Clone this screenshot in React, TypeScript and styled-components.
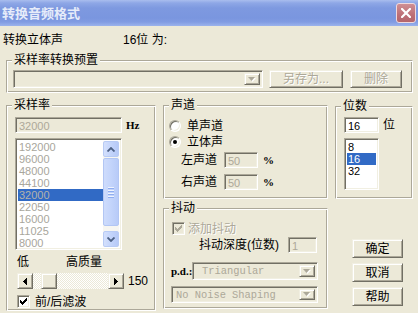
import React from 'react'
import styled, { createGlobalStyle, css } from 'styled-components'

const face = '#ECE9D8'
const shadow = '#ACA899'
const darkShadow = '#716F64'
const light = '#F1EFE2'
const grayText = '#ACA899'
const selection = '#316AC5'

const GlobalStyle = createGlobalStyle`
  html, body { margin: 0; padding: 0; background: ${face}; }
  body {
    font-family: 'Liberation Sans', 'Noto Sans CJK SC', sans-serif;
    font-size: 12px;
    color: #000;
  }
`

const sunken = css`
  box-sizing: border-box;
  border: 1px solid;
  border-color: ${shadow} #fff #fff ${shadow};
  box-shadow: inset 1px 1px 0 ${darkShadow}, inset -1px -1px 0 ${light};
`

const raised = css`
  box-sizing: border-box;
  border: 1px solid;
  border-color: ${light} ${darkShadow} ${darkShadow} ${light};
  box-shadow: inset 1px 1px 0 #fff, inset -1px -1px 0 ${shadow};
  background: ${face};
`

const Window = styled.div`
  width: 418px;
  height: 313px;
  overflow: hidden;
  display: flex;
  flex-direction: column;
  background: ${face};
`

const TitleBar = styled.div`
  height: 26px;
  flex: none;
  box-sizing: border-box;
  display: flex;
  align-items: center;
  justify-content: space-between;
  padding: 0 2px 0 2px;
  background: linear-gradient(
    180deg,
    #a9bdee 0px,
    #8ea7e6 3px,
    #7e99e0 8px,
    #7a96df 18px,
    #819ce2 22px,
    #9bb3ec 26px
  );
`

const Title = styled.span`
  font-family: 'Noto Sans CJK SC', sans-serif;
  font-weight: bold;
  font-size: 13px;
  line-height: 16px;
  color: #e6ecfa;
`

const CloseButton = styled.div`
  width: 20px;
  height: 20px;
  box-sizing: border-box;
  border: 1px solid #efd9dd;
  border-radius: 3px;
  background: linear-gradient(180deg, #cf8f94 0%, #bd6f76 60%, #b4656c 100%);
  display: flex;
  align-items: center;
  justify-content: center;
`

const InfoRow = styled.div`
  display: flex;
  margin: 7px 0 0 3px;
  height: 14px;
  line-height: 14px;
`

const InfoLabel = styled.span`
  width: 120px;
`

const Group = styled.div<{ $w: number; $h: number; $mt?: number }>`
  position: relative;
  flex: none;
  box-sizing: border-box;
  width: ${(p) => p.$w}px;
  height: ${(p) => p.$h}px;
  margin-top: ${(p) => p.$mt ?? 0}px;
  display: flex;
  flex-direction: column;
  border: 1px solid;
  border-color: ${shadow} #fff #fff ${shadow};
  box-shadow: inset 1px 1px 0 #fff, inset -1px -1px 0 ${shadow};
`

const Legend = styled.span`
  position: absolute;
  top: -8px;
  left: 5px;
  padding: 0 2px;
  background: ${face};
  font-size: 12px;
  line-height: 14px;
  white-space: nowrap;
`

const PresetGroup = styled(Group)`
  margin-left: 6px;
  margin-top: 13px;
  flex-direction: row;
  align-items: flex-start;
  padding: 9px 0 0 6px;
`

const Combo = styled.div<{ $w: number; $h?: number }>`
  ${sunken};
  width: ${(p) => p.$w}px;
  height: ${(p) => p.$h ?? 18}px;
  flex: none;
  background: ${face};
  display: flex;
  align-items: center;
  justify-content: space-between;
  padding: 2px;
`

const ComboText = styled.span<{ $indent: number }>`
  font-family: 'Liberation Mono', monospace;
  font-size: 10.4px;
  color: ${grayText};
  padding-left: ${(p) => p.$indent}px;
  line-height: 12px;
`

const DropButton = styled.div`
  ${raised};
  width: 16px;
  height: 100%;
  flex: none;
  display: flex;
  align-items: center;
  justify-content: center;
`

const PushButton = styled.div<{ $w: number; $h?: number; $ml?: number; $disabled?: boolean }>`
  ${raised};
  width: ${(p) => p.$w}px;
  height: ${(p) => p.$h ?? 19}px;
  flex: none;
  display: flex;
  align-items: center;
  justify-content: center;
  font-size: 12px;
  line-height: 14px;
  color: ${(p) => (p.$disabled ? grayText : '#000')};
  text-shadow: ${(p) => (p.$disabled ? '1px 1px 0 #fff' : 'none')};
  margin-left: ${(p) => p.$ml ?? 0}px;
`

const Lower = styled.div`
  display: flex;
  align-items: flex-start;
  margin: 12px 0 0 6px;
  gap: 7px;
`

const Column = styled.div`
  display: flex;
  flex-direction: column;
`

const FieldRow = styled.div<{ $mt: number; $pl: number; $h?: number }>`
  display: flex;
  align-items: center;
  margin-top: ${(p) => p.$mt}px;
  padding-left: ${(p) => p.$pl}px;
  height: ${(p) => p.$h ?? 16}px;
  line-height: 14px;
  white-space: nowrap;
`

const Edit = styled.div<{ $w: number; $disabled?: boolean }>`
  ${sunken};
  width: ${(p) => p.$w}px;
  height: 16px;
  flex: none;
  background: ${(p) => (p.$disabled ? face : '#fff')};
  color: ${(p) => (p.$disabled ? grayText : '#000')};
  font-size: 11px;
  line-height: 12px;
  padding: 2px 0 0 3px;
`

const Unit = styled.span<{ $ml?: number }>`
  font-family: 'Liberation Serif', serif;
  font-weight: bold;
  font-size: 11px;
  margin-left: ${(p) => p.$ml ?? 4}px;
`

const BitUnit = styled.span`
  margin-left: 4px;
`

const ListBox = styled.div<{ $w: number; $h: number; $mt: number; $ml: number }>`
  ${sunken};
  width: ${(p) => p.$w}px;
  height: ${(p) => p.$h}px;
  margin-top: ${(p) => p.$mt}px;
  margin-left: ${(p) => p.$ml}px;
  background: #fff;
  padding: 2px;
  display: flex;
  flex: none;
`

const Items = styled.div`
  flex: 1;
  display: flex;
  flex-direction: column;
`

const Item = styled.div<{ $sel?: boolean; $gray?: boolean }>`
  height: 12px;
  line-height: 12px;
  font-size: 11px;
  padding-left: 1px;
  background: ${(p) => (p.$sel ? selection : 'transparent')};
  color: ${(p) => (p.$gray ? (p.$sel ? '#b4b2aa' : '#a8a69c') : p.$sel ? '#fff' : '#000')};
`

const ScrollBar = styled.div`
  width: 16px;
  flex: none;
  display: flex;
  flex-direction: column;
  background: #f7f6f1;
`

const ScrollBtn = styled.div`
  height: 16px;
  box-sizing: border-box;
  border: 1px solid #b8cbf5;
  border-radius: 2px;
  background: linear-gradient(90deg, #d4e0fc 0%, #c3d4fb 50%, #b6c9f7 100%);
  display: flex;
  align-items: center;
  justify-content: center;
`

const ScrollTrack = styled.div`
  flex: 1;
  padding-top: 1px;
`

const ScrollThumb = styled.div`
  height: 68px;
  box-sizing: border-box;
  border: 1px solid #b2c6f4;
  border-radius: 2px;
  background: linear-gradient(90deg, #cedcfc 0%, #c3d4fb 50%, #b8cbf8 100%);
  display: flex;
  flex-direction: column;
  align-items: center;
  justify-content: center;
  gap: 1px;
`

const Grip = styled.div`
  width: 6px;
  height: 1px;
  background: #eef3fe;
  box-shadow: 0 1px 0 #8fadf0;
  margin-bottom: 1px;
`

const QualityRow = styled.div`
  display: flex;
  margin-top: 5px;
  padding-left: 10px;
  height: 14px;
  line-height: 14px;
`

const QualityLow = styled.span`
  width: 49px;
`

const SliderRow = styled.div`
  display: flex;
  align-items: center;
  margin-top: 4px;
  padding-left: 10px;
  height: 16px;
`

const ArrowButton = styled.div`
  ${raised};
  width: 16px;
  height: 16px;
  flex: none;
  display: flex;
  align-items: center;
  justify-content: center;
`

const SliderTrack = styled.div`
  width: 75px;
  height: 16px;
  flex: none;
  padding-left: 8px;
  box-sizing: border-box;
  background: repeating-conic-gradient(#fff 0 25%, ${face} 0 50%) 0 0 / 2px 2px;
`

const SliderThumb = styled.div`
  ${raised};
  width: 16px;
  height: 16px;
`

const SliderValue = styled.span`
  margin-left: 4px;
  font-size: 12px;
`

const CheckRow = styled.div<{ $mt: number; $pl: number }>`
  display: flex;
  align-items: center;
  height: 13px;
  margin-top: ${(p) => p.$mt}px;
  padding-left: ${(p) => p.$pl}px;
  line-height: 14px;
`

const CheckBox = styled.div<{ $disabled?: boolean }>`
  ${sunken};
  width: 13px;
  height: 13px;
  flex: none;
  background: ${(p) => (p.$disabled ? face : '#fff')};
  display: flex;
  align-items: center;
  justify-content: center;
`

const CheckLabel = styled.span<{ $disabled?: boolean; $ml: number }>`
  margin-left: ${(p) => p.$ml}px;
  color: ${(p) => (p.$disabled ? grayText : '#000')};
  text-shadow: ${(p) => (p.$disabled ? '1px 1px 0 #fff' : 'none')};
`

const Radio = styled.div`
  width: 12px;
  height: 12px;
  flex: none;
  box-sizing: border-box;
  border-radius: 50%;
  border: 1px solid;
  border-color: ${shadow} #fff #fff ${shadow};
  box-shadow: inset 1px 1px 0 ${darkShadow}, inset -1px -1px 0 ${light};
  background: #fff;
  display: flex;
  align-items: center;
  justify-content: center;
`

const RadioDot = styled.div`
  width: 4px;
  height: 4px;
  border-radius: 50%;
  background: #000;
`

const RadioLabel = styled.span`
  margin-left: 6px;
`

const FieldLabel = styled.span<{ $w: number }>`
  width: ${(p) => p.$w}px;
  flex: none;
`

const PdLabel = styled.span`
  width: 21px;
  flex: none;
  font-family: 'Liberation Serif', serif;
  font-weight: bold;
  font-size: 11px;
`

const ButtonStack = styled.div`
  display: flex;
  flex-direction: column;
  gap: 5px;
  margin-top: 40px;
  padding-left: 17px;
`

const CheckMark = ({ color }: { color: string }) => (
  <svg width="7" height="7" viewBox="0 0 7 7" shapeRendering="crispEdges">
    <path d="M0 2 L2 4 L7 -1 L7 2 L2 7 L0 5 Z" fill={color} />
  </svg>
)

const DownArrow = ({ disabled }: { disabled?: boolean }) => (
  <svg width="8" height="5" viewBox="0 0 8 5">
    {disabled && <polygon points="1,1 8,1 4.5,5" fill="#fff" />}
    <polygon points="0,0 7,0 3.5,4" fill={disabled ? grayText : '#000'} />
  </svg>
)

const Chevron = ({ up }: { up?: boolean }) => (
  <svg width="8" height="5" viewBox="0 0 8 5">
    <polyline
      points={up ? '0.5,4.5 4,1 7.5,4.5' : '0.5,0.5 4,4 7.5,0.5'}
      fill="none"
      stroke="#4d6185"
      strokeWidth="1.8"
    />
  </svg>
)

const SideArrow = ({ left }: { left?: boolean }) => (
  <svg width="4" height="7" viewBox="0 0 4 7" shapeRendering="crispEdges">
    <polygon points={left ? '4,0 4,7 0,3.5' : '0,0 0,7 4,3.5'} fill="#000" />
  </svg>
)

const sampleRates = ['192000', '96000', '48000', '44100', '32000', '22050', '16000', '11025', '8000']
const bitDepths = ['8', '16', '32']

export default function App() {
  return (
    <Window>
      <GlobalStyle />
      <TitleBar>
        <Title>转换音频格式</Title>
        <CloseButton>
          <svg width="10" height="10" viewBox="0 0 10 10">
            <path d="M1 1 L9 9 M9 1 L1 9" stroke="#fff" strokeWidth="2.2" strokeLinecap="square" />
          </svg>
        </CloseButton>
      </TitleBar>

      <InfoRow>
        <InfoLabel>转换立体声</InfoLabel>
        <span>16位 为:</span>
      </InfoRow>

      <PresetGroup $w={407} $h={33}>
        <Legend>采样率转换预置</Legend>
        <Combo $w={250}>
          <span />
          <DropButton>
            <DownArrow disabled />
          </DropButton>
        </Combo>
        <PushButton $w={74} $h={18} $ml={6} $disabled>
          另存为...
        </PushButton>
        <PushButton $w={52} $h={18} $ml={7} $disabled>
          删除
        </PushButton>
      </PresetGroup>

      <Lower>
        <Group $w={150} $h={206}>
          <Legend>采样率</Legend>
          <FieldRow $mt={11} $pl={8}>
            <Edit $w={107} $disabled>
              32000
            </Edit>
            <Unit $ml={4}>Hz</Unit>
          </FieldRow>
          <ListBox $w={107} $h={112} $mt={5} $ml={8}>
            <Items>
              {sampleRates.map((r) => (
                <Item key={r} $gray $sel={r === '32000'}>
                  {r}
                </Item>
              ))}
            </Items>
            <ScrollBar>
              <ScrollBtn>
                <Chevron up />
              </ScrollBtn>
              <ScrollTrack>
                <ScrollThumb>
                  <Grip />
                  <Grip />
                  <Grip />
                  <Grip />
                </ScrollThumb>
              </ScrollTrack>
              <ScrollBtn>
                <Chevron />
              </ScrollBtn>
            </ScrollBar>
          </ListBox>
          <QualityRow>
            <QualityLow>低</QualityLow>
            <span>高质量</span>
          </QualityRow>
          <SliderRow>
            <ArrowButton>
              <SideArrow left />
            </ArrowButton>
            <SliderTrack>
              <SliderThumb />
            </SliderTrack>
            <ArrowButton>
              <SideArrow />
            </ArrowButton>
            <SliderValue>150</SliderValue>
          </SliderRow>
          <CheckRow $mt={6} $pl={10}>
            <CheckBox>
              <CheckMark color="#000" />
            </CheckBox>
            <CheckLabel $ml={5}>前/后滤波</CheckLabel>
          </CheckRow>
        </Group>

        <Column>
          <Group $w={165} $h={94}>
            <Legend>声道</Legend>
            <FieldRow $mt={12} $pl={5}>
              <Radio />
              <RadioLabel>单声道</RadioLabel>
            </FieldRow>
            <FieldRow $mt={0} $pl={5}>
              <Radio>
                <RadioDot />
              </Radio>
              <RadioLabel>立体声</RadioLabel>
            </FieldRow>
            <FieldRow $mt={2} $pl={17}>
              <FieldLabel $w={43}>左声道</FieldLabel>
              <Edit $w={34} $disabled>
                50
              </Edit>
              <Unit $ml={5}>%</Unit>
            </FieldRow>
            <FieldRow $mt={6} $pl={17}>
              <FieldLabel $w={43}>右声道</FieldLabel>
              <Edit $w={34} $disabled>
                50
              </Edit>
              <Unit $ml={5}>%</Unit>
            </FieldRow>
          </Group>

          <Group $w={165} $h={101} $mt={9}>
            <Legend>抖动</Legend>
            <CheckRow $mt={13} $pl={8}>
              <CheckBox $disabled>
                <CheckMark color={grayText} />
              </CheckBox>
              <CheckLabel $ml={3} $disabled>
                添加抖动
              </CheckLabel>
            </CheckRow>
            <FieldRow $mt={2} $pl={35}>
              <FieldLabel $w={89}>抖动深度(位数)</FieldLabel>
              <Edit $w={29} $disabled>
                1
              </Edit>
            </FieldRow>
            <FieldRow $mt={9} $pl={7} $h={18}>
              <PdLabel>p.d.:</PdLabel>
              <Combo $w={126}>
                <ComboText $indent={7}>Triangular</ComboText>
                <DropButton>
                  <DownArrow disabled />
                </DropButton>
              </Combo>
            </FieldRow>
            <FieldRow $mt={6} $pl={7} $h={17}>
              <Combo $w={147} $h={17}>
                <ComboText $indent={2}>No Noise Shaping</ComboText>
                <DropButton>
                  <DownArrow disabled />
                </DropButton>
              </Combo>
            </FieldRow>
          </Group>
        </Column>

        <Column>
          <Group $w={78} $h={93} $mt={1}>
            <Legend>位数</Legend>
            <FieldRow $mt={10} $pl={8}>
              <Edit $w={35}>16</Edit>
              <BitUnit>位</BitUnit>
            </FieldRow>
            <ListBox $w={35} $h={52} $mt={5} $ml={8}>
              <Items>
                {bitDepths.map((b) => (
                  <Item key={b} $sel={b === '16'}>
                    {b}
                  </Item>
                ))}
              </Items>
            </ListBox>
          </Group>
          <ButtonStack>
            <PushButton $w={51}>确定</PushButton>
            <PushButton $w={51}>取消</PushButton>
            <PushButton $w={51}>帮助</PushButton>
          </ButtonStack>
        </Column>
      </Lower>
    </Window>
  )
}
